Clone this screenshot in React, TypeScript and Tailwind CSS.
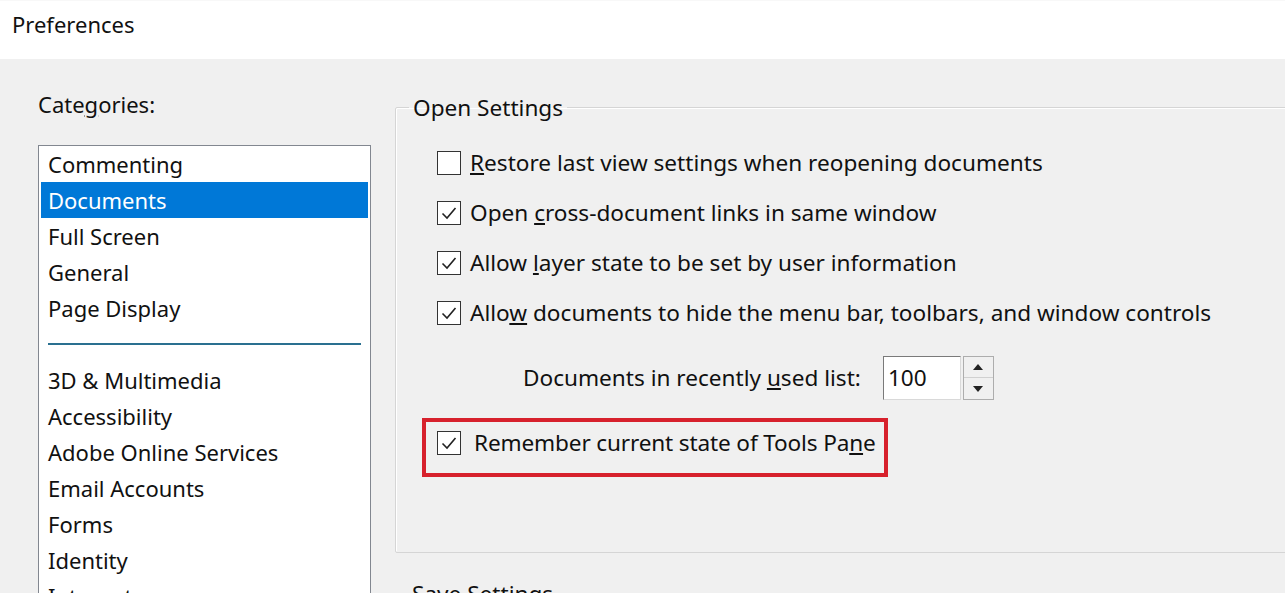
import React from "react";

const font = { fontFamily: '"Noto Sans", "Open Sans", sans-serif' };

function Check({ checked }: { checked: boolean }) {
    return (
        <span className="w-[24px] h-[24px] border-[1.5px] border-[#333] bg-white flex items-center justify-center shrink-0">
            {checked && (
                <svg width="18" height="18" viewBox="0 0 18 18">
                    <path d="M2.5 9.5 L7 14 L15.5 4" fill="none" stroke="#222" strokeWidth="1.6" />
                </svg>
            )}
        </span>
    );
}

const categoriesTop = ["Commenting", "Documents", "Full Screen", "General", "Page Display"];
const categoriesBottom = ["3D & Multimedia", "Accessibility", "Adobe Online Services", "Email Accounts", "Forms", "Identity", "Internet"];

function Item({ label, selected }: { label: string; selected?: boolean }) {
    return (
        <div className={"h-[36px] flex items-center px-[7px] " + (selected ? "bg-[#0078d7] text-white" : "text-[#111]")}>
            {label}
        </div>
    );
}

export default function App() {
    return (
        <div className="w-[1285px] h-[593px] overflow-hidden bg-[#f0f0f0] text-[22px] text-[#111]" style={font}>
            <div className="h-[59px] bg-white flex items-start pl-[12px] pt-[7px] border-t border-t-[#f8f8f8]">
                Preferences
            </div>
            <div className="flex">
                <div className="w-[333px] ml-[38px] shrink-0">
                    <div className="h-[86px] pt-[29px]">
                        Cate<span className="underline">g</span>ories:
                    </div>
                    <div className="border border-[#828790] bg-white h-[470px] pt-0 px-[2px]">
                        {categoriesTop.map((c) => (
                            <Item key={c} label={c} selected={c === "Documents"} />
                        ))}
                        <div className="h-[36px] flex items-center px-[7px]">
                            <div className="h-[2px] bg-[#2a7090] w-full" />
                        </div>
                        {categoriesBottom.map((c) => (
                            <Item key={c} label={c} />
                        ))}
                    </div>
                </div>
                <div className="ml-[24px] pt-[32px] shrink-0 text-[22.6px]">
                    <fieldset className="w-[960px] h-[462px] border border-[#d5d5d5] rounded-[2px] px-[41px] shadow-[inset_1px_1px_0_#fff]">
                        <legend className="ml-[-28px] px-[4px]">Open Settings</legend>
                        <div className="flex flex-col mt-[13px]">
                            <label className="h-[50px] flex items-center gap-[9px]">
                                <Check checked={false} />
                                <span><span className="underline">R</span>estore last view settings when reopening documents</span>
                            </label>
                            <label className="h-[50px] flex items-center gap-[9px]">
                                <Check checked />
                                <span>Open <span className="underline">c</span>ross-document links in same window</span>
                            </label>
                            <label className="h-[50px] flex items-center gap-[9px]">
                                <Check checked />
                                <span>Allow <span className="underline">l</span>ayer state to be set by user information</span>
                            </label>
                            <label className="h-[50px] flex items-center gap-[9px]">
                                <Check checked />
                                <span>Allo<span className="underline">w</span> documents to hide the menu bar, toolbars, and window controls</span>
                            </label>
                            <div className="flex items-center mt-[18px] ml-[86px] h-[44px]">
                                <span>Documents in recently <span className="underline">u</span>sed list:</span>
                                <div className="ml-[22px] w-[78px] h-[44px] bg-white border border-[#7a7a7a] border-r-[#d9d9d9] border-b-[#d9d9d9] flex items-center pl-[4px]">
                                    100
                                </div>
                                <div className="ml-[2px] w-[31px] h-[44px] flex flex-col border border-[#adadad] bg-[#f0f0f0]">
                                    <div className="flex-1 flex items-center justify-center border-b border-[#d0d0d0]">
                                        <svg width="10" height="6" viewBox="0 0 10 6"><path d="M0 6 L5 0 L10 6 Z" fill="#222" /></svg>
                                    </div>
                                    <div className="flex-1 flex items-center justify-center">
                                        <svg width="10" height="6" viewBox="0 0 10 6"><path d="M0 0 L5 6 L10 0 Z" fill="#222" /></svg>
                                    </div>
                                </div>
                            </div>
                            <div className="ml-[-15px] mt-[18px] w-[466px] h-[59px] border-[4px] border-[#d7212c] flex items-center pl-[11px] pb-[8px] gap-[13px]">
                                <Check checked />
                                <span className="tracking-[-0.15px]">Remember current state of Tools Pa<span className="underline">n</span>e</span>
                            </div>
                        </div>
                    </fieldset>
                    <div className="ml-[17px] mt-[24px]">Save Settings</div>
                </div>
            </div>
        </div>
    );
}
